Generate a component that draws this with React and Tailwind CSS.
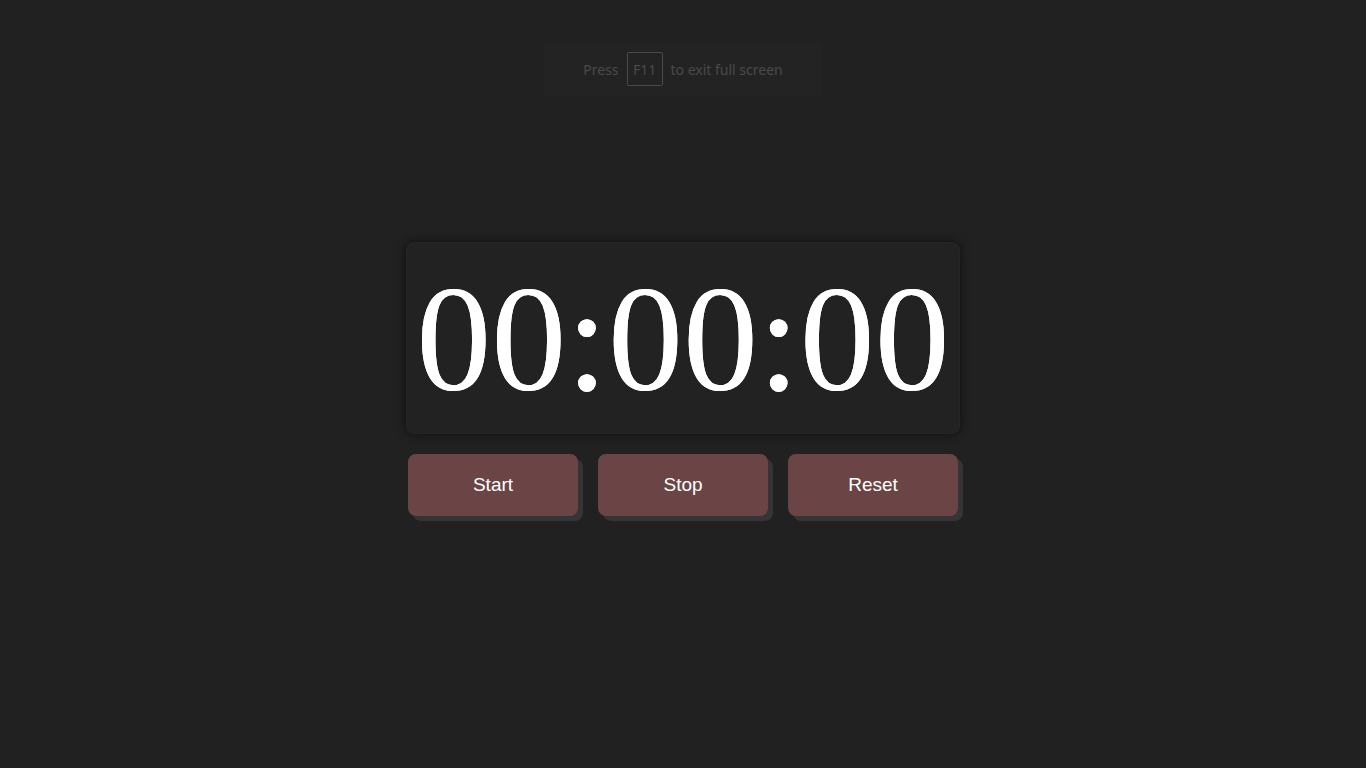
import React, { useEffect, useRef, useState } from 'react';

const pad = (n) => String(n).padStart(2, '0');

const formatTime = (secs) => {
  const h = Math.floor(secs / 3600);
  const m = Math.floor((secs % 3600) / 60);
  const s = secs % 60;
  return `${pad(h)}:${pad(m)}:${pad(s)}`;
};

const App = () => {
  const [seconds, setSeconds] = useState(0);
  const [running, setRunning] = useState(false);
  const timer = useRef(null);

  useEffect(() => {
    if (running) {
      timer.current = setInterval(() => setSeconds((s) => s + 1), 1000);
    }
    return () => clearInterval(timer.current);
  }, [running]);

  const btn =
    'w-[170px] h-[62px] rounded-lg bg-[#6b4545] text-white text-[19px] shadow-[5px_5px_0_#353535] font-["Liberation_Sans",Arial,sans-serif]';

  return (
    <div className="min-h-screen w-full bg-[#212121] flex flex-col items-center">
      {/* fullscreen hint */}
      <div className="mt-[44px] w-[278px] h-[52px] bg-[#232324] flex items-center justify-center gap-2 text-[14px] text-[#4a4a4a] font-['Noto_Sans','Open_Sans',sans-serif] pb-[2px]">
        <span>Press</span>
        <span className="w-[36px] h-[34px] border border-[#4a4a4a] rounded-[2px] flex items-center justify-center">
          F11
        </span>
        <span>to exit full screen</span>
      </div>

      {/* clock */}
      <div className="mt-[146px] w-[554px] h-[192px] rounded-lg bg-[#222222] border border-[#262626] shadow-[0_0_10px_rgba(0,0,0,0.6)] flex items-center justify-center">
        <span className="text-white text-[150px] leading-none font-['Liberation_Serif','Times_New_Roman',serif] pt-[2px] [text-shadow:0_0_0.6px_#fff]">
          {formatTime(seconds)}
        </span>
      </div>

      {/* controls */}
      <div className="mt-[20px] flex gap-5">
        <button className={btn} onClick={() => setRunning(true)}>
          Start
        </button>
        <button className={btn} onClick={() => setRunning(false)}>
          Stop
        </button>
        <button
          className={btn}
          onClick={() => {
            setRunning(false);
            setSeconds(0);
          }}
        >
          Reset
        </button>
      </div>
    </div>
  );
};

export default App;
